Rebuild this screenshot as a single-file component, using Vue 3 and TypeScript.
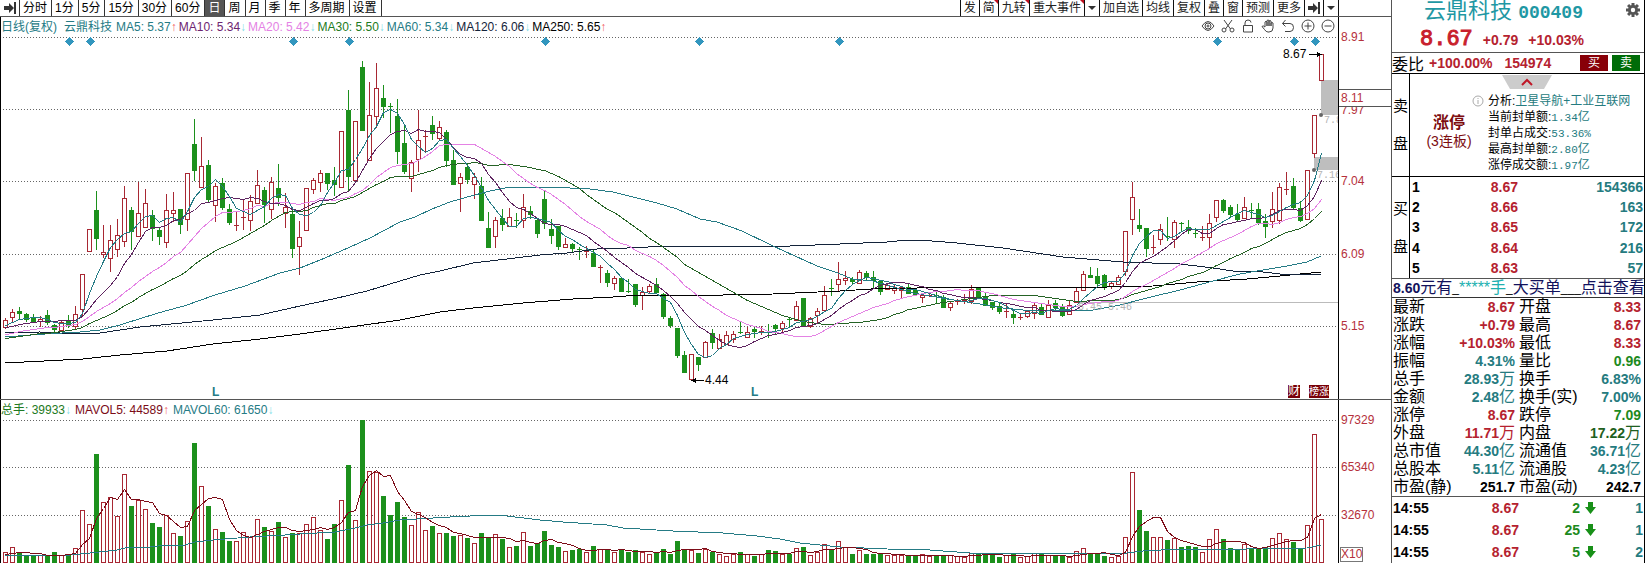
<script setup lang="ts">
type Candle = { up: boolean; high: number; top: number; bottom: number; low: number; vol: number }
type Cell = { label: string; value: string; unit?: string; tone: string }

const leftTabs = ['分时', '1分', '5分', '15分', '30分', '60分', '日', '周', '月', '季', '年', '多周期', '设置']
const rightTabs = [
  { t: '发' }, { t: '简', hot: true }, { t: '九转', hot: true }, { t: '重大事件', hot: true }, { t: '▾' },
  { t: '加自选' }, { t: '均线' }, { t: '复权' }, { t: '叠' }, { t: '窗' }, { t: '预测' }, { t: '更多' }, { t: '⇥' }, { t: '▾' },
]
const legend = [
  { t: 'MA5: 5.37', c: 'ma5', up: true }, { t: 'MA10: 5.34', c: 'ma10' }, { t: 'MA20: 5.42', c: 'ma20' },
  { t: 'MA30: 5.50', c: 'ma30' }, { t: 'MA60: 5.34', c: 'ma60' }, { t: 'MA120: 6.06', c: 'ma120' },
  { t: 'MA250: 5.65', c: 'ma250', up: true },
]

/* side high top bottom low volume, one candle per entry, in chart units */
const raw = `r318 320 327 328 552|r309 312 317 322 547|g307 311 313 318 552|g313 314 319 321 556|g314 317 322 322 556|r316 319 321 326 555|g310 315 322 324 555|g324 325 329 331 552|r321 322 330 330 555|g315 321 325 327 555|r306 314 326 329 548|r274 274 309 315 510
r229 229 251 251 524|g191 210 238 249 454|r225 252 254 257 502|r225 240 258 271 497|r219 235 249 256 516|r186 198 241 246 474|g207 210 231 249 506|r182 213 236 236 500|r189 203 227 227 509|g210 215 228 240 523|g227 230 236 244 527|r194 210 242 247 515
r192 210 213 221 533|g209 209 224 233 536|r173 173 219 230 521|g119 144 170 180 443|r137 166 187 187 486|g160 165 199 201 506|r183 186 205 221 529|g178 183 207 209 532|g204 209 222 224 541|r211 225 225 230 541|r199 217 217 229 532|r195 201 220 230 537
r170 185 203 203 519|g187 190 204 222 527|r177 182 209 218 531|g164 188 197 205 522|r193 207 213 227 537|g208 214 248 257 533|r221 237 246 274 533|r188 188 230 230 524|r178 180 189 193 517|r170 173 182 191 530|g173 173 183 189 539|g167 180 184 195 524
r131 131 187 187 500|g90 110 176 190 465|r121 121 180 182 520|g61 67 130 130 420|r82 115 160 160 471|r63 88 116 127 472|g85 98 106 117 496|g103 106 106 132 515|g99 116 151 163 502|g126 143 171 173 517|r160 162 178 191 525|r110 140 159 171 512
r130 136 136 152 530|g116 125 133 139 526|r121 127 138 140 533|g130 132 160 166 533|g150 160 184 184 536|r173 177 183 211 535|g163 167 179 183 538|r173 177 184 198 543|g177 186 220 220 533|g212 228 247 247 538|r217 220 236 247 534|g209 218 224 230 539
r208 217 226 226 547|g213 220 221 227 546|r194 207 220 227 532|g206 211 214 218 546|g218 220 233 237 543|g191 199 223 228 531|g219 229 235 243 545|g226 226 246 249 547|r238 244 247 247 551|g243 244 248 251 550|g247 249 249 259 549|r246 251 252 257 552
g249 253 266 266 546|r265 267 267 282 549|g270 273 282 286 550|r276 278 283 289 552|g278 278 291 291 549|g279 291 291 292 552|g284 284 304 306 550|r287 292 295 309 552|r284 286 291 292 554|g278 284 292 292 552|g293 294 316 318 549|g316 318 325 327 554
g328 328 355 357 541|g351 355 372 372 549|r354 354 379 379 550|g357 357 364 370 553|r341 342 357 357 549|g329 333 342 348 552|r334 339 348 348 554|r331 335 344 344 556|r331 334 339 342 554|g321 332 332 333 552|r327 332 337 337 554|g327 329 331 337 556
r326 331 331 334 554|g324 332 332 337 550|g324 325 328 333 551|r321 323 328 332 554|g317 319 320 326 554|r301 306 320 320 548|g298 298 326 326 547|r317 318 326 327 555|r308 311 315 323 552|r286 295 310 310 544|g279 288 288 295 549|r262 279 284 291 541
r271 278 280 284 547|g277 279 281 284 554|r270 272 283 283 550|g271 273 277 280 554|g271 277 280 288 554|g280 281 291 294 553|r283 285 289 289 555|r285 288 290 293 555|r287 287 290 298 555|g283 287 293 293 555|g289 290 294 295 555|r293 295 297 302 554
r293 295 295 296 556|g292 295 296 302 555|g295 297 307 307 556|r302 303 307 310 555|r299 301 301 304 556|r294 300 300 303 557|r285 289 301 303 553|g287 288 297 297 553|g293 297 305 305 553|g302 302 307 309 555|g303 306 311 313 557|r303 311 311 317 555
g310 314 317 323 553|r313 317 317 319 557|r310 311 316 317 556|r303 305 313 318 553|g304 307 314 314 554|r300 305 317 317 555|g300 303 307 309 556|g304 307 315 316 556|r301 305 314 314 557|r287 291 302 302 551|r271 274 290 290 548|g267 275 277 277 554
g268 276 283 287 553|g274 275 287 289 556|r281 283 286 288 557|r275 277 284 284 556|r231 231 271 275 537|r182 197 219 234 472|g209 225 228 231 510|g228 228 248 256 531|r235 247 248 253 537|r224 229 239 244 537|g217 236 236 240 540|r220 222 239 247 538
g222 223 223 230 547|g220 227 230 233 546|g228 233 234 237 547|r226 237 237 240 552|r214 223 237 248 539|r200 200 217 221 529|g199 200 210 212 539|g205 207 214 217 548|g204 214 219 221 549|r197 207 218 218 544|g203 210 210 217 548|g203 209 222 224 549
g214 221 226 237 547|r192 209 221 227 538|r183 187 220 223 533|r172 189 189 194 539|g178 186 207 209 542|g201 208 220 221 548|r170 170 219 219 525|r115 115 153 157 434|r54 54 80 80 519`

const candles: Candle[] = raw.split(/[|\n]/).map((s) => {
  const [high, top, bottom, low, vol] = s.slice(1).split(' ').map(Number)
  return { up: s[0] === 'r', high, top, bottom, low, vol }
})
const cx = (i: number): number => 5 + 7 * i

const fill = (n: number, v: number): number[] => Array.from({ length: n }, () => v)
const closes = [...fill(10, 347), ...fill(10, 341), ...fill(5, 330), ...fill(4, 326), ...candles.map((c) => (c.up ? c.top : c.bottom))]
const vols = [...fill(29, 555), ...candles.map((c) => c.vol)]
function average(src: number[], n: number): string {
  return candles
    .map((_, i) => {
      const part = src.slice(i + 30 - n, i + 30)
      return `${cx(i) + 0.5},${Math.round(part.reduce((a, b) => a + b, 0) / n) + 0.5}`
    })
    .join(' ')
}
const lines = [
  { c: 'ma250', p: '5,363 83,359 120,355 167,351 213,344 260,339 300,334 350,327 400,320 440,312 473,308 523,303 573,299 613,297 640,295 723,295 773,294 840,291 887,288 917,288 1107,287 1153,286 1197,282 1247,279 1280,276 1321,272' },
  { c: 'ma120', p: '5,333 40,332 80,334 100,333 140,327 213,320 260,315 300,306 333,299 367,291 400,281 420,275 440,271 473,263 507,259 540,255 567,253 597,249 627,248 670,246 790,246 840,244 887,242 907,240 920,240 957,243 1003,248 1063,257 1123,262 1180,264 1213,268 1233,271 1263,272 1280,274 1297,275 1321,274' },
  { c: 'ma60', p: '5,337 45,334 80,332 100,330 120,325 142,318 165,311 184,306 215,295 245,286 280,273 300,268 325,258 350,247 370,238 400,222 415,217 432,209 450,202 467,197 490,191 505,188 530,187 550,187 570,188 590,189 613,192 633,197 657,203 677,209 700,219 717,222 742,231 773,246 817,266 838,273 852,279 873,281 887,285 913,293 947,299 980,304 1003,308 1023,310 1047,310 1077,311 1093,310 1120,305 1147,298 1180,290 1213,281 1240,274 1263,270 1287,266 1307,262 1321,256' },
  { c: 'ma30', p: average(closes, 30) },
  { c: 'ma20', p: average(closes, 20) },
  { c: 'ma10', p: average(closes, 10) },
  { c: 'ma5', p: average(closes, 5) },
]
const vol60 = '5,555 70,555 90,553 117,550 125,548 150,547 167,545 185,545 195,542 213,540 250,537 285,535 300,534 335,532 355,528 367,525 383,523 400,520 417,519 450,517 490,515 507,516 540,520 563,522 607,525 623,528 673,531 723,533 757,536 780,539 800,543 840,547 887,549 930,550 970,553 1047,553 1127,553 1143,551 1180,549 1220,549 1246,549 1307,548 1321,545'
const vol5 = average(vols, 5)

const diamonds = [69, 90, 293, 349, 545, 699, 839, 1217, 1294, 1315]
const left = (x: number): { left: string } => ({ left: `${((x - 1) / 1337) * 100}%` })

const priceAxis = [
  { t: '8.91', y: 20 }, { t: '8.11', y: 81, box: true }, { t: '7.97', y: 93 }, { t: '7.04', y: 164 }, { t: '6.09', y: 237 }, { t: '5.15', y: 309 },
]
const volAxis = [{ t: '97329', y: 20 }, { t: '65340', y: 67 }, { t: '32670', y: 115 }]

const analysis = [
  ['分析', '卫星导航+工业互联网', ''], ['当前封单额', '1.34', '亿'], ['封单占成交', '53.36%', ''], ['最高封单额', '2.80', '亿'], ['涨停成交额', '1.97', '亿'],
]
const bids = [['1', '8.67', '154366'], ['2', '8.66', '163'], ['3', '8.65', '172'], ['4', '8.64', '216'], ['5', '8.63', '57']]
const stats: Cell[][] = [
  [{ label: '最新', value: '8.67', tone: 'red' }, { label: '开盘', value: '8.33', tone: 'red' }],
  [{ label: '涨跌', value: '+0.79', tone: 'red' }, { label: '最高', value: '8.67', tone: 'red' }],
  [{ label: '涨幅', value: '+10.03%', tone: 'red' }, { label: '最低', value: '8.33', tone: 'red' }],
  [{ label: '振幅', value: '4.31%', tone: 'teal' }, { label: '量比', value: '0.96', tone: 'green' }],
  [{ label: '总手', value: '28.93', unit: '万', tone: 'teal' }, { label: '换手', value: '6.83%', tone: 'teal' }],
  [{ label: '金额', value: '2.48', unit: '亿', tone: 'teal' }, { label: '换手(实)', value: '7.00%', tone: 'teal' }],
  [{ label: '涨停', value: '8.67', tone: 'red' }, { label: '跌停', value: '7.09', tone: 'green' }],
  [{ label: '外盘', value: '11.71', unit: '万', tone: 'red' }, { label: '内盘', value: '17.22', unit: '万', tone: 'dgreen' }],
  [{ label: '总市值', value: '44.30', unit: '亿', tone: 'teal' }, { label: '流通值', value: '36.71', unit: '亿', tone: 'teal' }],
  [{ label: '总股本', value: '5.11', unit: '亿', tone: 'teal' }, { label: '流通股', value: '4.23', unit: '亿', tone: 'teal' }],
  [{ label: '市盈(静)', value: '251.7', tone: 'black' }, { label: '市盈(动)', value: '242.7', tone: 'black' }],
]
const trades = [['2', '1'], ['25', '1'], ['5', '2']]
</script>

<template>
  <div class="terminal">
    <main class="main">
      <nav class="toolbar">
        <div class="tabs">
          <button type="button" class="tab icon" aria-label="收起">
            <svg width="12" height="12" viewBox="0 0 12 12"><path d="M0 4h5V1l5 5-5 5V8H0z" /><path d="M10 0h2v12h-2z" /></svg>
          </button>
          <button v-for="t in leftTabs" :key="t" type="button" class="tab wide" :class="{ active: t === '日' }">{{ t }}</button>
        </div>
        <div class="tabs right">
          <button v-for="(b, i) in rightTabs" :key="i" type="button" class="tab" :class="{ hot: b.hot }">
            <svg v-if="b.t === '▾'" width="8" height="12" viewBox="0 0 8 12"><path d="M0 4h8L4 8z" /></svg>
            <svg v-else-if="b.t === '⇥'" width="12" height="12" viewBox="0 0 12 12"><path d="M0 4h5V1l5 5-5 5V8H0z" /><path d="M10 0h2v12h-2z" /></svg>
            <template v-else>{{ b.t }}</template>
          </button>
        </div>
      </nav>

      <div class="board">
        <section class="plot">
          <div class="legend">
            <span class="ma5 name">日线(复权)</span>
            <span class="ma5 name">云鼎科技</span>
            <span v-for="l in legend" :key="l.t" class="item" :class="l.c">{{ l.t }}<i :class="l.up ? 'up' : 'down'">{{ l.up ? '↑' : '↓' }}</i></span>
            <span class="tools">
              <svg viewBox="0 0 14 14"><path d="M1 7q6-9 12 0q-6 9-12 0z" /><circle cx="7" cy="7" r="3" /><circle cx="7" cy="7" r="1" /></svg>
              <svg viewBox="0 0 14 14"><path d="M3 1l6.500 9M11 1L4.500 10" /><circle cx="3" cy="11" r="2" /><circle cx="11" cy="11" r="2" /></svg>
              <svg viewBox="0 0 14 14"><path d="M2.500 6.500h9v6.500h-9zM4 6.500V4q0-3 3-3t3 2.500" /></svg>
              <svg viewBox="0 0 14 14"><path d="M4 8V3q1-1.500 2 0V7V1.500q1-1 2 0V7V2q1-1 2 0V7V4q1-1 2 0V9q0 4-4 4H7Q5 13 3.500 10.500L1 7.500q1-1.500 3 .5" /></svg>
              <svg viewBox="0 0 14 14"><path d="M4.500 1L1.500 4.500l3 3M1.500 4.500H9q3.500 0 3.500 4t-3.500 4H4" /></svg>
              <svg viewBox="0 0 14 14"><circle cx="7" cy="7" r="6" /><path d="M3.500 7h7M7 3.500v7" /></svg>
              <svg viewBox="0 0 14 14"><circle cx="7" cy="7" r="6" /><path d="M3.500 7h7" /></svg>
            </span>
          </div>
          <div class="price">
            <svg class="chart" viewBox="1 35 1337 364" preserveAspectRatio="none">
              <path class="grid" d="M3 37.500H1338M3 109.500H1338M3 181.500H1338M3 254.500H1338M3 326.500H1338" />
              <path class="support" d="M1077 302.500H1338" />
              <path class="gap" d="M1321 80h17v35h-17zM1314 157h24v13h-24z" />
              <path v-for="x in diamonds" :key="x" class="diamond" :d="`M${x + 0.5} 37l4.500 4.500-4.500 4.500-4.500-4.500z`" />
              <g v-for="(c, i) in candles" :key="i" :class="c.up ? 'rise' : 'fall'">
                <path :d="`M${cx(i) + 0.5} ${c.high}V${c.low + 1}`" />
                <path v-if="c.bottom - c.top < 2" :d="`M${cx(i) - 2} ${c.top + 0.5}h5`" />
                <rect v-else :x="cx(i) - 1.5" :y="c.top + 0.5" width="4" :height="c.bottom - c.top" />
              </g>
              <polyline v-for="l in lines" :key="l.c" class="line" :class="l.c" :points="l.p" />
              <circle class="dot" cx="1321" cy="115" r="2" /><circle class="dot" cx="1314" cy="170" r="2" />
              <path class="mark" d="M1309 54.500h9" /><path class="tip" d="M1317 52v5l5-2.500z" />
              <path class="mark" d="M694 380.500h10" /><path class="tip" d="M696 378v5l-5-2.500z" />
            </svg>
            <span class="pin high" :style="left(1283)">8.67</span>
            <span class="pin low" :style="left(705)">4.44</span>
            <span class="pin faint g1" :style="left(1324)">7.8</span>
            <span class="pin faint g2" :style="left(1317)">7.16</span>
            <span class="pin faint g3" :style="left(1078)">5.45 5.46</span>
            <span class="pin lot" :style="left(212)">L</span>
            <span class="pin lot" :style="left(751)">L</span>
            <span class="pin tag" :style="left(1288)">财</span>
            <span class="pin tag pair" :style="left(1309)">榜涨</span>
          </div>
        </section>
        <aside class="axis">
          <span v-for="a in priceAxis" :key="a.t" class="tick" :class="{ boxed: a.box }" :style="{ top: a.y + 'px' }">{{ a.t }}</span>
        </aside>
      </div>

      <div class="board volume">
        <section class="plot">
          <div class="legend">
            <span class="item ma30">总手: 39933<i class="down">↓</i></span>
            <span class="item mavol">MAVOL5: 44589<i class="up">↑</i></span>
            <span class="item ma60">MAVOL60: 61650<i class="down">↓</i></span>
          </div>
          <svg class="chart vol" viewBox="1 418 1337 145" preserveAspectRatio="none">
            <path class="grid" d="M3 420.500H1338M3 467.500H1338M3 515.500H1338" />
            <g v-for="(c, i) in candles" :key="i" :class="c.up ? 'rise' : 'fall'">
              <rect :x="cx(i) - 1.5" :y="c.vol + 0.5" width="4" :height="562 - c.vol" />
            </g>
            <polyline class="line ma60" :points="vol60" />
            <polyline class="line mavol" :points="vol5" />
          </svg>
        </section>
        <aside class="axis">
          <span v-for="a in volAxis" :key="a.t" class="tick" :style="{ top: a.y + 'px' }">{{ a.t }}</span>
          <span class="times">X10</span>
        </aside>
      </div>
    </main>

    <aside class="side">
      <header class="head">
        <h1>云鼎科技 <b>000409</b></h1>
        <button type="button" class="gear" aria-label="设置">
          <svg width="14" height="14" viewBox="-7 -7 14 14">
            <path v-for="a in [0, 45, 90, 135]" :key="a" d="M-1.500-7h3v14h-3z" :transform="`rotate(${a})`" />
            <circle r="5" /><circle class="hole" r="2.200" />
          </svg>
        </button>
        <p class="quote"><strong>8.67</strong><span>+0.79</span><span>+10.03%</span></p>
      </header>
      <div class="ratio">
        <span class="cap">委比</span><b class="red">+100.00%</b><b class="red amount">154974</b>
        <button type="button" class="buy">买</button><button type="button" class="sell">卖</button>
      </div>
      <section class="asks">
        <div class="vert"><span>卖</span><span>盘</span></div>
        <div class="limit">
          <svg class="fold" width="50" height="14" viewBox="0 0 50 14"><path d="M0 0h50l-8 14H8z" /><path class="chev" d="M20 10l5-5 5 5" /></svg>
          <div class="status"><b>涨停</b><span>(3连板)</span></div>
          <div class="facts">
            <p v-for="(a, i) in analysis" :key="a[0]">
              <svg v-if="i === 0" class="info" width="12" height="12" viewBox="0 0 12 12"><circle cx="6" cy="6" r="5" /><path d="M6 3v1M6 5v4" /></svg>
              {{ a[0] }}:<a v-if="i === 0" href="#">{{ a[1] }}</a><span v-else><i>{{ a[1] }}</i>{{ a[2] }}</span>
            </p>
          </div>
        </div>
      </section>
      <section class="bids">
        <div class="vert"><span>买</span><span>盘</span></div>
        <table>
          <tbody>
            <tr v-for="b in bids" :key="b[0]"><th scope="row">{{ b[0] }}</th><td class="red">{{ b[1] }}</td><td class="teal last">{{ b[2] }}</td></tr>
          </tbody>
        </table>
      </section>
      <a class="alert" href="#"><span><b>8.60</b>元有</span><s>_</s><em>*****手</em><s>_</s><span>大买单</span><s class="go">___</s><span>点击查看</span></a>
      <table class="stats">
        <tbody>
          <tr v-for="r in stats" :key="r[0].label">
            <template v-for="c in r" :key="c.label">
              <th scope="row">{{ c.label }}</th>
              <td :class="c.tone">{{ c.value }}<span v-if="c.unit">{{ c.unit }}</span></td>
            </template>
          </tr>
        </tbody>
      </table>
      <table class="trades">
        <tbody>
          <tr v-for="(t, i) in trades" :key="i">
            <td class="black time">14:55</td><td class="red">8.67</td><td class="green">{{ t[0] }}</td>
            <td class="arrow"><svg width="11" height="12" viewBox="0 0 11 12"><path d="M3 0h5v5h3l-5.500 7L0 5h3z" /></svg></td>
            <td class="teal">{{ t[1] }}</td>
          </tr>
        </tbody>
      </table>
    </aside>
  </div>
</template>

<style>
body { margin: 0; background: #fff; }
</style>

<style scoped>
.terminal { display: grid; grid-template-columns: minmax(0, 1fr) 255px; font-family: "Liberation Sans", "Noto Sans CJK SC", sans-serif; font-size: 12px; color: #000; background: #fff; overflow: hidden; }
button { font: inherit; margin: 0; padding: 0; border: 0; background: none; color: inherit; cursor: pointer; }
p, h1 { margin: 0; font-weight: normal; }
table { border-collapse: collapse; }
td, th { padding: 0; font-weight: normal; }
i, em { font-style: normal; }

.toolbar { display: flex; justify-content: space-between; height: 16px; padding-right: 52px; border-bottom: 1px solid #555; }
.tabs { display: flex; height: 16px; }
.tab { position: relative; display: flex; align-items: center; justify-content: center; padding: 0 3px; border-left: 1px solid #111; line-height: 14px; white-space: nowrap; overflow: hidden; color: #222; }
.tab.wide { border-left: 0; border-right: 1px solid #333; padding: 0 4px 0 3px; color: #000; }
.tab.icon { border-left: 0; border-right: 1px solid #333; padding: 0 3px 0 4px; }
.tab.active { background: #555; color: #fff; }
.tab svg { fill: #333; flex: none; }
.tabs.right { border-right: 1px solid #111; }
.tab.hot::after { content: ""; position: absolute; top: 0; right: 0; border-top: 4px solid #c01020; border-left: 4px solid transparent; }

.board { display: grid; grid-template-columns: minmax(0, 1fr) 52px; border-bottom: 1px solid #555; }
.board.volume { border-bottom: 0; }
.plot { border-left: 1px solid #000; border-right: 1px solid #000; min-width: 0; }
.legend { display: flex; height: 18px; line-height: 20px; white-space: nowrap; overflow: hidden; gap: 2px; }
.volume .legend { gap: 4px; }
.legend .name { margin-right: 5px; }
.legend .name + .name { margin-right: 2px; }
.legend i { display: inline-block; width: 6px; font-size: 12px; }
.legend .item { flex: none; }
.up { color: #f06060; }
.down { color: #80e0e8; }
.tools { display: flex; gap: 6px; margin-left: auto; align-items: center; padding-right: 3px; }
.tools svg { width: 14px; height: 14px; fill: none; stroke: #444; stroke-width: 1; }
.ma5 { color: #257b85; stroke: #257b85; }
.ma10 { color: #6d2470; stroke: #5e2460; }
.ma20 { color: #e482e4; stroke: #e482e4; }
.ma30 { color: #1d7a22; stroke: #256325; }
.ma60 { color: #257b85; stroke: #257b85; }
.ma120 { color: #13233a; stroke: #13233a; }
.ma250 { color: #000; stroke: #000; }
.mavol { color: #7c0c18; stroke: #7c0c18; }
.legend span { stroke: none; }
.price { position: relative; overflow: hidden; }
.chart { display: block; width: 100%; height: 364px; }
.chart.vol { height: 145px; }
.chart path, .chart rect, .line { stroke-width: 1; shape-rendering: crispEdges; }
.line { fill: none; }
.grid { stroke: #666; stroke-dasharray: 1 2; }
.support { stroke: #bbb; }
.gap { fill: #bebebe; }
.diamond { fill: #3296be; }
.dot { fill: #666; }
.mark { stroke: #000; }
.rise { stroke: #a82833; fill: #fff; }
.fall { stroke: #1c901c; fill: #1c901c; }
.pin { position: absolute; line-height: 14px; white-space: nowrap; }
.high { top: 12px; }
.low { top: 338px; }
.faint { color: #b4b4b4; font-family: "Liberation Mono", monospace; font-size: 10px; }
.g1 { top: 79px; }
.g2 { top: 134px; }
.g3 { top: 266px; }
.lot { top: 350px; color: #257b85; font-weight: bold; }
.tag { top: 350px; width: 12px; height: 13px; line-height: 13px; background: #780008; color: #fff; text-align: center; }
.tag.pair { width: 20px; font-size: 10px; }
.axis { position: relative; color: #b5303b; }
.tick { position: absolute; left: 0; right: 0; padding-left: 2px; line-height: 16px; transform: translateY(-50%); }
.tick.boxed { z-index: 1; border: solid #555; border-width: 1px 0; background: #fff; line-height: 16px; }
.times { position: absolute; left: 1px; bottom: 1px; border: 1px solid #777; line-height: 13px; padding: 0; }

.side { border-left: 1px solid #555; border-right: 1px solid #000; margin-right: 1px; font-size: 14px; }
.red { color: #b5222f; }
.teal { color: #257b80; }
.green { color: #1d8a1d; }
.dgreen { color: #1f6020; }
.black { color: #000; }
.head { position: relative; height: 52px; border-bottom: 1px solid #555; }
h1 { padding-left: 32px; line-height: 22px; font-size: 22px; color: #1f98a4; white-space: nowrap; }
h1 b { font: bold 18px "Liberation Mono", monospace; }
.gear { position: absolute; top: 3px; right: 4px; width: 14px; height: 14px; }
.gear svg { display: block; fill: #555; }
.gear .hole { fill: #fff; }
.quote { display: flex; align-items: baseline; gap: 10px; padding-left: 28px; line-height: 34px; font-weight: bold; color: #b5222f; }
.quote strong { font: 22px/34px "Liberation Mono", monospace; color: #c8202c; -webkit-text-stroke: 1px; }
.ratio { display: flex; align-items: center; height: 20px; border-bottom: 1px solid #000; }
.cap { width: 37px; font-size: 16px; }
.amount { margin-left: 12px; }
.ratio button { width: 28px; height: 16px; line-height: 16px; font-size: 12px; color: #fff; }
.ratio .buy { background: #880008; margin-left: auto; }
.ratio .sell { background: #006c08; margin: 0 4px; }
.asks, .bids { display: grid; grid-template-columns: 18px 1fr; }
.asks { height: 102px; border-bottom: 1px solid #000; }
.bids { height: 101px; border-bottom: 1px solid #555; }
.vert { display: flex; flex-direction: column; align-items: center; justify-content: center; gap: 16px; border-right: 1px solid #000; font-size: 15px; line-height: 22px; }
.limit { position: relative; display: grid; grid-template-columns: 64px 1fr; padding-left: 14px; }
.fold { position: absolute; top: 1px; left: 92px; fill: #ccc; }
.chev { fill: none; stroke: #c01828; stroke-width: 2; }
.status { display: flex; flex-direction: column; justify-content: center; color: #7c0c10; line-height: 18px; align-items: center; width: 50px; margin-top: 14px; }
.status b { font-size: 16px; }
.facts { padding-top: 19px; line-height: 16px; font-size: 12px; white-space: nowrap; }
.facts p { position: relative; height: 16px; }
.facts a, .facts span { color: #257b80; text-decoration: none; }
.facts i { font: 11px "Liberation Mono", monospace; }
.info { position: absolute; left: -16px; top: 2px; fill: none; stroke: #aaa; }
.bids table { width: 100%; font-weight: bold; }
.bids tr { height: 20px; }
.bids th { width: 40px; padding-left: 2px; text-align: left; font-weight: bold; }
.bids td { text-align: right; width: 66px; font-weight: bold; }
.bids .last { width: auto; padding-right: 1px; }
.alert { display: flex; align-items: center; height: 18px; padding: 0 3px 0 1px; border-bottom: 1px solid #333; font-size: 16px; line-height: 18px; color: #12125c; text-decoration: none; white-space: nowrap; overflow: hidden; }
.alert b { font-size: 14px; }
.alert em { color: #20b0b0; }
.alert s { font-size: 12px; text-decoration: none; color: #000; }
.alert .go { margin: 0 auto; }
.stats { width: 100%; table-layout: fixed; border-bottom: 1px solid #555; }
.stats tr { height: 18px; }
.stats th { width: 54px; padding-left: 1px; font-size: 16px; line-height: 18px; text-align: left; white-space: nowrap; overflow: visible; }
.stats td { text-align: right; line-height: 18px; font-weight: bold; padding-right: 3px; white-space: nowrap; }
.stats td span { font-size: 16px; font-weight: normal; }
.trades { width: 100%; font-weight: bold; }
.trades tr { height: 22px; }
.trades td { text-align: right; font-weight: bold; }
.trades .time { text-align: left; padding-left: 1px; width: 60px; }
.trades .red { width: 66px; }
.trades .green { width: 61px; }
.trades .arrow { width: 18px; }
.trades svg { display: block; margin-left: 5px; fill: #189018; }
.trades .teal { padding-right: 1px; }
</style>
